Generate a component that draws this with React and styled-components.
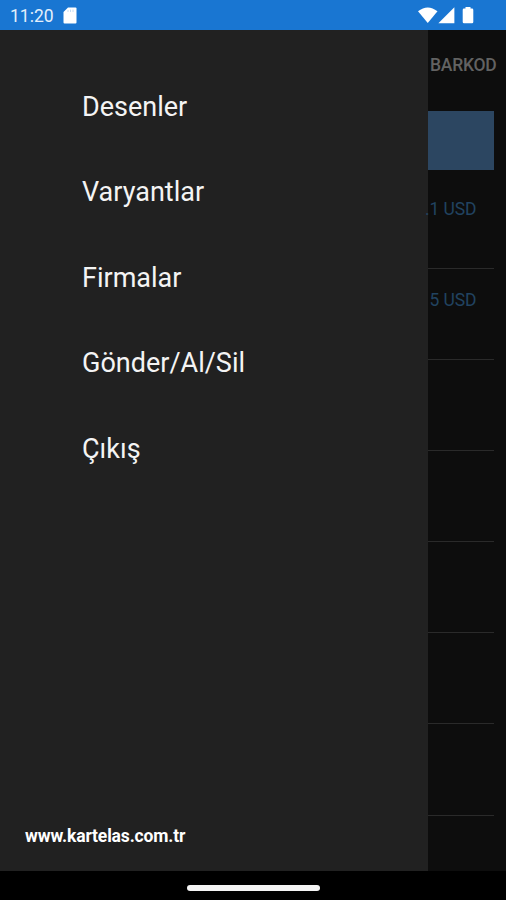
import React from "react";
import styled, { createGlobalStyle } from "styled-components";

const menuItems = ["Desenler", "Varyantlar", "Firmalar", "Gönder/Al/Sil", "Çıkış"];

const prices = [".1 USD", "5 USD", "", "", "", "", ""];

const App = () => {
  return (
    <>
      <GlobalStyle />
      <Screen>
        <StatusBar>
          <Clock>11:20</Clock>
          <SdCard viewBox="0 0 14 17">
            <path d="M5 0.5H12.5Q13.5 0.5 13.5 1.5V15.5Q13.5 16.5 12.5 16.5H1.5Q0.5 16.5 0.5 15.5V5Z" />
            <path d="M5 3V5M7.5 2.6V5M10 2.6V5" stroke="#c4dcf5" strokeWidth="1" />
          </SdCard>
          <StatusIcons viewBox="0 0 56 17">
            <path d="M0 4.3Q9.7 -3.4 19.5 4.3L9.75 16Z" />
            <path d="M36.4 0.3V16.3H20.4Z" />
            <path d="M47.5 0H52.5V1.6H54Q55.3 1.6 55.3 2.9V15Q55.3 16.3 54 16.3H46Q44.7 16.3 44.7 15V2.9Q44.7 1.6 46 1.6H47.5Z" />
          </StatusIcons>
        </StatusBar>

        <Main>
          <Drawer>
            <Menu>
              {menuItems.map((item) => (
                <MenuItem key={item}>{item}</MenuItem>
              ))}
            </Menu>
            <Website>www.kartelas.com.tr</Website>
          </Drawer>

          <Page>
            <Tab>BARKOD</Tab>
            <Banner />
            {prices.map((price, i) => (
              <Row key={i} $first={i === 0}>
                <Price>{price}</Price>
              </Row>
            ))}
          </Page>
        </Main>

        <NavBar>
          <Handle />
        </NavBar>
      </Screen>
    </>
  );
};

const GlobalStyle = createGlobalStyle`
  * {
    box-sizing: border-box;
  }

  body {
    margin: 0;
    background: #000;
    font-family: Roboto, sans-serif;
  }
`;

const Screen = styled.div`
  display: flex;
  flex-direction: column;
  width: 506px;
  height: 900px;
  overflow: hidden;
  background: #000;
`;

const StatusBar = styled.header`
  display: flex;
  align-items: flex-start;
  height: 30px;
  padding: 7px 32px 0 10px;
  background: #1976d2;
`;

const Clock = styled.div`
  width: 53px;
  font-size: 17.5px;
  line-height: 18px;
  color: #e3effb;
`;

const SdCard = styled.svg`
  width: 14px;
  height: 17px;
  fill: #fff;
`;

const StatusIcons = styled.svg`
  width: 56px;
  height: 17px;
  margin-left: auto;
  fill: #fff;
`;

const Main = styled.div`
  display: flex;
  height: 841px;
`;

const Drawer = styled.aside`
  display: flex;
  flex-direction: column;
  justify-content: space-between;
  width: 428px;
  padding: 35px 25px 22px;
  background: #212121;
`;

const Menu = styled.nav`
  padding-left: 57px;
`;

const MenuItem = styled.div`
  height: 85.4px;
  font-size: 27px;
  line-height: 85.4px;
  color: #f4f4f4;
`;

const Website = styled.div`
  font-size: 17.5px;
  font-weight: 700;
  line-height: 26px;
  letter-spacing: -0.15px;
  color: #fff;
`;

const Page = styled.main`
  width: 78px;
  padding-right: 12px;
  background: #0d0d0d;
`;

const Tab = styled.div`
  height: 81px;
  padding-left: 2px;
  font-size: 17.5px;
  font-weight: 500;
  line-height: 71px;
  letter-spacing: -0.25px;
  color: #626262;
`;

const Banner = styled.div`
  height: 59px;
  background: #2c4661;
`;

const Row = styled.div`
  height: ${(props) => (props.$first ? "99px" : "91.1px")};
  padding-top: ${(props) => (props.$first ? "29px" : "20.5px")};
  border-bottom: 1px solid #2a2a2a;
`;

const Price = styled.div`
  display: flex;
  justify-content: flex-end;
  padding-right: 17.5px;
  font-size: 17.5px;
  line-height: 21px;
  letter-spacing: -0.1px;
  white-space: nowrap;
  color: #214360;
`;

const NavBar = styled.footer`
  display: flex;
  justify-content: center;
  height: 29px;
  padding: 14px 0 0 1px;
`;

const Handle = styled.div`
  width: 133px;
  height: 6px;
  border-radius: 3px;
  background: #f5f5f5;
`;

export default App;
